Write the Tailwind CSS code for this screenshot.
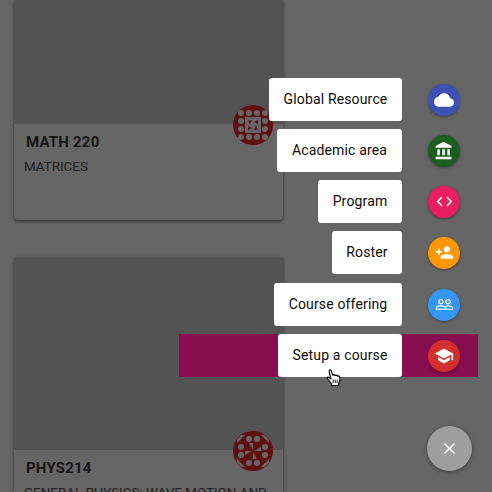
<!DOCTYPE html>
<html lang="en">
<head>
<meta charset="utf-8">
<title>Courses</title>
<script src="https://cdn.jsdelivr.net/npm/@tailwindcss/browser@4"></script>
</head>
<body class="relative h-[492px] w-[492px] overflow-hidden bg-[#666] font-[Roboto,sans-serif] text-[#161616]">
<main class="flex h-[492px] w-[283px] flex-col gap-[38px] pl-[14px]">
  <article class="relative h-[220px] shrink-0 rounded-b-[4px] bg-[#666] shadow-[0_2px_3px_rgba(0,0,0,0.35),0_0_4px_rgba(0,0,0,0.18)]">
    <div class="h-[124px] bg-[#545454]"></div>
    <h2 class="pt-[7px] pl-3 text-[15px] leading-[22px] font-bold tracking-[0.2px]">MATH 220</h2>
    <p class="pt-[4px] pl-[10px] text-[13.4px] leading-[20px] text-[#202020]">MATRICES</p>
    <svg class="absolute top-[105px] right-[10px] h-10 w-10" viewBox="0 0 40 40">
      <circle cx="20" cy="20" r="20" fill="#601010"/>
      <g fill="#666"><circle cx="8" cy="8" r="3"/><circle cx="16" cy="8" r="3"/><circle cx="24" cy="8" r="3"/><circle cx="32" cy="8" r="3"/><circle cx="8" cy="16" r="3"/><circle cx="8" cy="24" r="3"/><circle cx="32" cy="16" r="3"/><circle cx="32" cy="24" r="3"/><circle cx="8" cy="32" r="3"/><circle cx="16" cy="32" r="3"/><circle cx="24" cy="32" r="3"/><circle cx="32" cy="32" r="3"/><path d="M12 12h16v16H12z"/></g>
      <path fill="#601010" d="M15 15.500h4l-2 4zM25 15v4l-4-2zM15 21l4 2-4 2zM21 24.800l2-4 2 4z"/>
    </svg>
  </article>
  <article class="relative min-h-0 grow bg-[#666] shadow-[0_2px_3px_rgba(0,0,0,0.35),0_0_4px_rgba(0,0,0,0.18)]">
    <div class="h-[192px] bg-[#545454]"></div>
    <h2 class="pt-[7px] pl-3 text-[15px] leading-[22px] font-bold tracking-[0.2px]">PHYS214</h2>
    <p class="pt-[4px] pl-[10px] text-[13.4px] leading-[20px] whitespace-nowrap text-[#202020]">GENERAL PHYSICS: WAVE MOTION AND</p>
    <svg class="absolute top-[173px] right-[10px] h-10 w-10" viewBox="0 0 40 40">
      <circle cx="20" cy="20" r="20" fill="#601010"/>
      <g fill="#666"><circle cx="16" cy="8" r="3"/><circle cx="24" cy="8" r="3"/><circle cx="8" cy="16" r="3"/><circle cx="8" cy="24" r="3"/><circle cx="32" cy="16" r="3"/><circle cx="32" cy="24" r="3"/><circle cx="16" cy="32" r="3"/><circle cx="24" cy="32" r="3"/><path d="M4 12V8.500L8.500 4H12zM28 4h3.500L36 8.500V12zM36 28v3.500L31.500 36H28zM12 36H8.500L4 31.500V28zM16 12h4v7zM28 16v4h-7zM24 28h-4v-7zM12 24v-4h7z"/></g>
    </svg>
  </article>
</main>

<nav class="absolute top-[78px] right-[14px] flex w-[299px] flex-col gap-2 text-[14px] tracking-[0.15px] text-[#0c0c0c]">
  <div class="flex h-[43px] items-center justify-end gap-[26px] pr-[18px]">
    <span class="flex h-[43px] w-[133px] items-center justify-center rounded-[3px] bg-white">Global Resource</span>
    <i class="flex size-8 items-center justify-center rounded-full bg-[#3f51b5] shadow-[0_1px_3px_rgba(0,0,0,0.4)]"><svg class="size-5" viewBox="0 0 24 24" fill="#fff"><path d="M19.350 10.040C18.670 6.590 15.640 4 12 4 9.110 4 6.600 5.640 5.350 8.040 2.340 8.360 0 10.910 0 14c0 3.310 2.690 6 6 6h13c2.760 0 5-2.240 5-5 0-2.640-2.050-4.780-4.650-4.960z"/></svg></i>
  </div>
  <div class="flex h-[43px] items-center justify-end gap-[26px] pr-[18px]">
    <span class="flex h-[43px] w-[125px] items-center justify-center rounded-[3px] bg-white">Academic area</span>
    <i class="flex size-8 items-center justify-center rounded-full bg-[#1b5e20] shadow-[0_1px_3px_rgba(0,0,0,0.4)]"><svg class="size-5" viewBox="0 0 24 24" fill="#fff"><path d="M4 10v7h3v-7H4zm6 0v7h3v-7h-3zM2 22h19v-3H2v3zm14-12v7h3v-7h-3zM11.500 1L2 6v2h19V6l-9.500-5z"/></svg></i>
  </div>
  <div class="flex h-[43px] items-center justify-end gap-[26px] pr-[18px]">
    <span class="flex h-[43px] w-[84px] items-center justify-center rounded-[3px] bg-white">Program</span>
    <i class="flex size-8 items-center justify-center rounded-full bg-[#e91e63] shadow-[0_1px_3px_rgba(0,0,0,0.4)]"><svg class="size-[19px]" viewBox="0 0 24 24" fill="#fff"><path d="M9.400 16.600L4.800 12l4.600-4.600L8 6l-6 6 6 6 1.400-1.400zm5.200 0l4.600-4.600-4.600-4.600L16 6l6 6-6 6-1.400-1.400z"/></svg></i>
  </div>
  <div class="flex h-[43px] items-center justify-end gap-[26px] pr-[18px]">
    <span class="flex h-[43px] w-[70px] items-center justify-center rounded-[3px] bg-white">Roster</span>
    <i class="flex size-8 items-center justify-center rounded-full bg-[#ff9800] shadow-[0_1px_3px_rgba(0,0,0,0.4)]"><svg class="size-[19px]" viewBox="0 0 24 24" fill="#fff"><path d="M15 12c2.210 0 4-1.790 4-4s-1.790-4-4-4-4 1.790-4 4 1.790 4 4 4zm-9-2V7H4v3H1v2h3v3h2v-3h3v-2H6zm9 4c-2.670 0-8 1.340-8 4v2h16v-2c0-2.660-5.330-4-8-4z"/></svg></i>
  </div>
  <div class="mt-px flex h-[43px] items-center justify-end gap-[26px] pr-[18px]">
    <span class="flex h-[43px] w-[128px] items-center justify-center rounded-[3px] bg-white">Course offering</span>
    <i class="flex size-8 items-center justify-center rounded-full bg-[#3596f3] shadow-[0_1px_3px_rgba(0,0,0,0.4)]"><svg class="size-[19px]" viewBox="0 0 24 24" fill="#fff"><path d="M16.500 13c-1.200 0-3.070.34-4.500 1-1.430-.67-3.300-1-4.500-1C5.330 13 1 14.080 1 16.250V19h22v-2.750c0-2.170-4.330-3.250-6.500-3.250zm-4 4.500h-10v-1.250c0-.54 2.560-1.750 5-1.750s5 1.210 5 1.750v1.250zm9 0H14v-1.250c0-.46-.2-.86-.52-1.220.88-.3 1.960-.53 3.020-.53 2.440 0 5 1.210 5 1.750v1.250zM7.500 12c1.930 0 3.500-1.570 3.500-3.500S9.430 5 7.500 5 4 6.570 4 8.500 5.570 12 7.500 12zm0-5.500c1.100 0 2 .9 2 2s-.9 2-2 2-2-.9-2-2 .9-2 2-2zm9 5.500c1.930 0 3.500-1.570 3.500-3.500S18.430 5 16.500 5 13 6.570 13 8.500s1.570 3.500 3.500 3.500zm0-5.500c1.100 0 2 .9 2 2s-.9 2-2 2-2-.9-2-2 .9-2 2-2z"/></svg></i>
  </div>
  <div class="flex h-[43px] items-center justify-end gap-[26px] bg-[#880e4f] pr-[18px]">
    <span class="flex h-[43px] w-[124px] items-center justify-center rounded-[3px] bg-white">Setup a course</span>
    <i class="flex size-8 items-center justify-center rounded-full bg-[#d32f2f] shadow-[0_1px_3px_rgba(0,0,0,0.4)]"><svg class="size-5" viewBox="0 0 24 24" fill="#fff"><path d="M5 13.180v4L12 21l7-3.820v-4L12 17l-7-3.820zM12 3L1 9l11 6 9-4.910V17h2V9L12 3z"/></svg></i>
  </div>
</nav>

<button class="absolute top-[426px] left-[427px] flex size-[45px] items-center justify-center rounded-full bg-[#9e9e9e] shadow-[0_1px_4px_rgba(0,0,0,0.4)]" aria-label="Close"><svg class="size-[19px]" viewBox="0 0 24 24" fill="#fff"><path d="M19 6.410L17.590 5 12 10.590 6.410 5 5 6.410 10.590 12 5 17.590 6.410 19 12 13.410 17.590 19 19 17.590 13.410 12z"/></svg></button>

<svg class="absolute top-[369px] left-[326px] h-[18px] w-4" viewBox="0 0 16 18"><path fill="#fff" stroke="#000" stroke-width="1.100" stroke-linejoin="round" d="M5.500 16.500v-2L1.500 9.800C.5 8.400 2 7.500 3 8.300L5 10 3.200 2.500C2.800.8 4.700.3 5.200 1.800L6.800 6.300C7.200 5.300 8.800 5.400 9 6.600 9.600 5.800 11 6 11.300 7.200 12.200 6.500 13.800 7 13.900 8.500 14.200 11 13.700 12.500 12.700 14.300v2.200z"/><path fill="none" stroke="#000" stroke-width=".9" d="M7.200 10.500v3.500M9.200 10.500v3.500M11.200 10.500v3.500"/></svg>
</body>
</html>
